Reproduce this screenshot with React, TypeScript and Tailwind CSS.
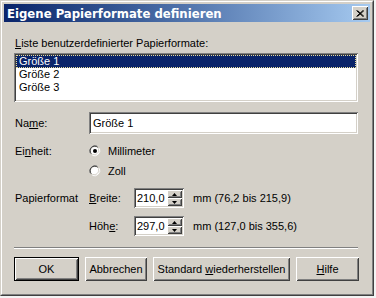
import React from 'react';

const font = { fontFamily: '"Liberation Sans", Arial, sans-serif' };
const titleFont = { fontFamily: '"DejaVu Sans Condensed", "Liberation Sans", sans-serif' };

const raised =
  'shadow-[inset_1px_1px_0_#ffffff,inset_-1px_-1px_0_#404040,inset_2px_2px_0_#d4d0c8,inset_-2px_-2px_0_#808080]';
const sunken =
  'shadow-[inset_1px_1px_0_#808080,inset_-1px_-1px_0_#ffffff,inset_2px_2px_0_#404040,inset_-2px_-2px_0_#d4d0c8]';

function Btn({ children, w, isDefault }: { children: React.ReactNode; w: string; isDefault?: boolean }) {
  return (
    <div className={`${w} h-[24px] ${isDefault ? 'border border-black' : ''} bg-[#d4d0c8]`}>
      <div className={`w-full h-full flex items-center justify-center text-[11px] text-black ${raised}`}>
        {children}
      </div>
    </div>
  );
}

function Radio({ checked, label }: { checked?: boolean; label: string }) {
  return (
    <div className="flex items-center h-[14px]">
      <svg width="12" height="12" viewBox="0 0 12 12" className="ml-[75px]">
        <path d="M8 1 A5.5 5.5 0 0 0 1 8" stroke="#808080" fill="none" strokeWidth="1" />
        <path d="M9 2.5 A4.5 4.5 0 0 0 2.5 9" stroke="#404040" fill="none" strokeWidth="1" />
        <circle cx="6" cy="6" r="4" fill="#ffffff" />
        <path d="M10.5 3.5 A5.5 5.5 0 0 1 3.5 10.5" stroke="#ffffff" fill="none" strokeWidth="1" />
        <path d="M9.5 4 A4.5 4.5 0 0 1 4 9.5" stroke="#d4d0c8" fill="none" strokeWidth="1" />
        {checked && <circle cx="6" cy="6" r="2" fill="#000000" />}
      </svg>
      <span className="ml-[7px] text-[11px]">{label}</span>
    </div>
  );
}

function Spinner({ value }: { value: string }) {
  return (
    <div className={`w-[50px] h-[20px] bg-white flex items-stretch p-[2px] ${sunken}`}>
      <div className="flex-1 flex items-center pl-[1px] text-[11px]">{value}</div>
      <div className="w-[15px] flex flex-col">
        {[0, 1].map((i) => (
          <div key={i} className={`flex-1 bg-[#d4d0c8] flex items-center justify-center ${raised}`}>
            <svg width="5" height="3" viewBox="0 0 5 3">
              {i === 0 ? <path d="M2.5 0 L5 3 L0 3 Z" fill="#000" /> : <path d="M0 0 L5 0 L2.5 3 Z" fill="#000" />}
            </svg>
          </div>
        ))}
      </div>
    </div>
  );
}

export default function App() {
  return (
    <div className="w-[376px] h-[298px] bg-[#f4f4f4]" style={font}>
      <div className="w-[374px] h-[296px] bg-[#d4d0c8] border border-t-[#d4d0c8] border-l-[#d4d0c8] border-r-[#404040] border-b-[#404040]">
        <div className="w-full h-full border border-t-white border-l-white border-r-[#808080] border-b-[#808080] px-[2px] pt-[2px] flex flex-col">
          {/* title bar */}
          <div className="h-[18px] bg-gradient-to-r from-[#0a246a] to-[#a6caf0] flex items-center justify-between pl-[3px] pr-[2px]">
            <span className="text-white font-bold text-[13px] leading-none" style={titleFont}>
              Eigene Papierformate definieren
            </span>
            <div className={`w-[16px] h-[14px] bg-[#d4d0c8] flex items-center justify-center ${raised}`}>
              <svg width="8" height="7" viewBox="0 0 8 7">
                <path d="M0.5 0.5 L7 6.5 M1.5 0.5 L8 6.5 M7 0.5 L0.5 6.5 M8 0.5 L1.5 6.5" stroke="#000" strokeWidth="1" />
              </svg>
            </div>
          </div>

          <div className="flex flex-col pl-[10px] pr-[12px] text-black text-[11px]">
            <div className="mt-[14px] h-[14px] leading-[14px] pl-[1px]">
              <span className="underline">L</span>iste benutzerdefinierter Papierformate:
            </div>

            {/* list */}
            <div className={`mt-[3px] w-[344px] h-[49px] bg-white p-[2px] ${sunken}`}>
              <div className="h-[13px] leading-[11px] bg-[#0a246a] text-white pl-[2px] border border-dotted border-[#e8dc98]">
                Größe 1
              </div>
              <div className="h-[13px] leading-[13px] pl-[3px]">Größe 2</div>
              <div className="h-[13px] leading-[13px] pl-[3px]">Größe 3</div>
            </div>

            {/* name */}
            <div className="mt-[10px] flex items-center h-[22px]">
              <span className="w-[75px] pl-[1px]">
                Na<span className="underline">m</span>e:
              </span>
              <div className={`w-[269px] h-[22px] bg-white flex items-center pl-[4px] ${sunken}`}>Größe 1</div>
            </div>

            {/* einheit */}
            <div className="mt-[10px] relative">
              <span className="absolute left-[1px] top-0 leading-[14px]">
                Ei<span className="underline">n</span>heit:
              </span>
              <Radio checked label="Millimeter" />
            </div>
            <div className="mt-[6px]">
              <Radio label="Zoll" />
            </div>

            {/* papierformat */}
            <div className="mt-[10px] flex items-center h-[20px]">
              <span className="w-[75px] pl-[1px]">Papierformat</span>
              <span className="w-[45px]">
                <span className="underline">B</span>reite:
              </span>
              <Spinner value="210,0" />
              <span className="ml-[9px]">mm (76,2 bis 215,9)</span>
            </div>
            <div className="mt-[8px] flex items-center h-[20px]">
              <span className="w-[75px]" />
              <span className="w-[45px]">
                Höh<span className="underline">e</span>:
              </span>
              <Spinner value="297,0" />
              <span className="ml-[9px]">mm (127,0 bis 355,6)</span>
            </div>

            {/* separator */}
            <div className="mt-[11px] w-[344px] h-[2px] border-t border-t-[#808080] border-b border-b-white" />

            {/* buttons */}
            <div className="mt-[8px] w-[345px] flex justify-between">
              <Btn w="w-[65px]" isDefault>
                OK
              </Btn>
              <Btn w="w-[62px]">Abbrechen</Btn>
              <Btn w="w-[137px]">
                Standard&nbsp;<span className="underline">w</span>iederherstellen
              </Btn>
              <Btn w="w-[63px]">
                <span className="underline">H</span>ilfe
              </Btn>
            </div>
          </div>
        </div>
      </div>
    </div>
  );
}
